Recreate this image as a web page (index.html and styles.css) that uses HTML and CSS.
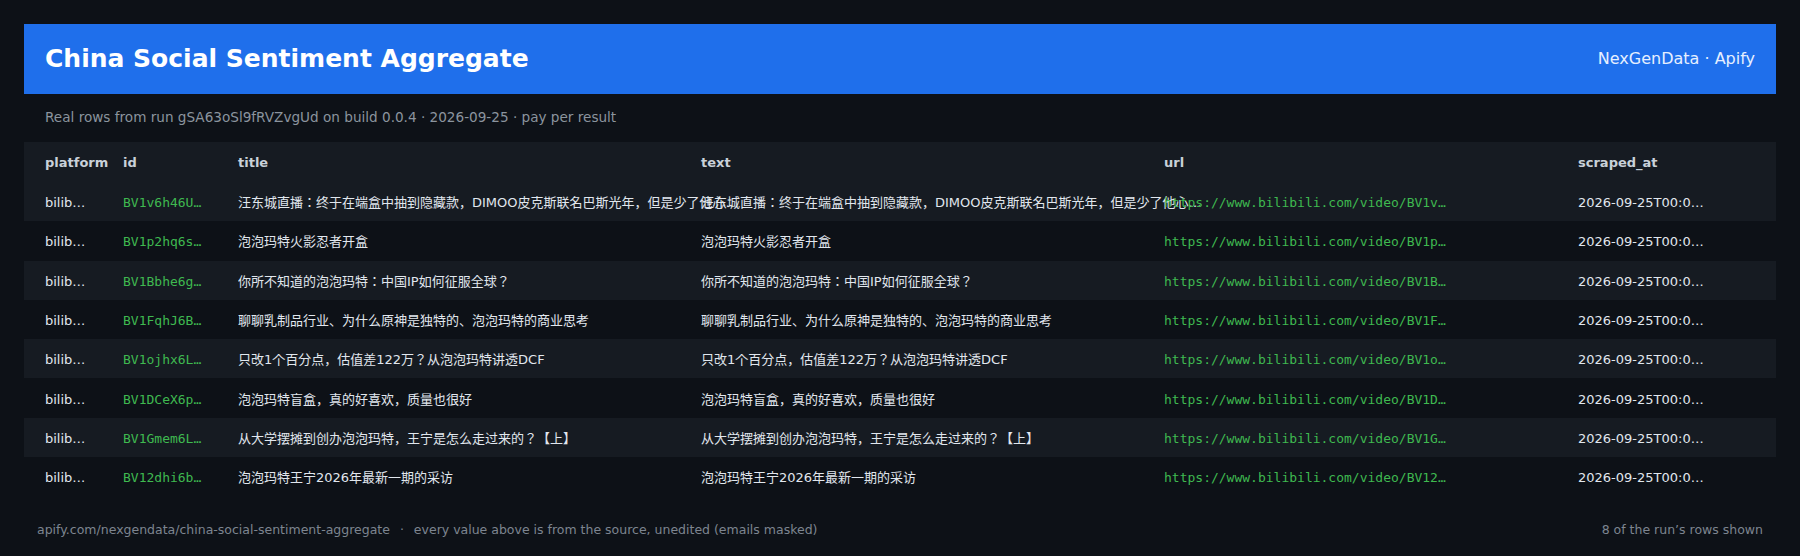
FILE: index.html
```html
<!DOCTYPE html>
<html lang="en">
<head>
<meta charset="utf-8">
<title>China Social Sentiment Aggregate</title>
<link rel="stylesheet" href="styles.css">
</head>
<body>
<div class="page">
  <header class="bar">
    <h1 class="bar-title">China Social Sentiment Aggregate</h1>
    <div class="bar-brand">NexGenData · Apify</div>
  </header>
  <p class="sub">Real rows from run gSA63oSl9fRVZvgUd on build 0.0.4 · 2026-09-25 · pay per result</p>
  <table class="grid">
    <colgroup>
      <col class="c-platform"><col class="c-id"><col class="c-title"><col class="c-text"><col class="c-url"><col class="c-time">
    </colgroup>
    <thead>
      <tr><th>platform</th><th>id</th><th>title</th><th>text</th><th>url</th><th>scraped_at</th></tr>
    </thead>
    <tbody>
      <tr>
        <td><div class="v v-plat">bilibili.com</div></td>
        <td><div class="v v-id">BV1v6h46UEaX</div></td>
        <td><div class="v v-long">汪东城直播：终于在端盒中抽到隐藏款，DIMOO皮克斯联名巴斯光年，但是少了他心心念念的胡迪</div></td>
        <td><div class="v v-long">汪东城直播：终于在端盒中抽到隐藏款，DIMOO皮克斯联名巴斯光年，但是少了他心心念念的胡迪</div></td>
        <td><div class="v v-url">https://www.bilibili.com/video/BV1v6h46UEaX</div></td>
        <td><div class="v v-time">2026-09-25T00:04:12Z</div></td>
      </tr>
      <tr>
        <td><div class="v v-plat">bilibili.com</div></td>
        <td><div class="v v-id">BV1p2hq6sE7k</div></td>
        <td><div class="v v-long">泡泡玛特火影忍者开盒</div></td>
        <td><div class="v v-long">泡泡玛特火影忍者开盒</div></td>
        <td><div class="v v-url">https://www.bilibili.com/video/BV1p2hq6sE7k</div></td>
        <td><div class="v v-time">2026-09-25T00:04:12Z</div></td>
      </tr>
      <tr>
        <td><div class="v v-plat">bilibili.com</div></td>
        <td><div class="v v-id">BV1Bbhe6gEyq</div></td>
        <td><div class="v v-long">你所不知道的泡泡玛特：中国IP如何征服全球？</div></td>
        <td><div class="v v-long">你所不知道的泡泡玛特：中国IP如何征服全球？</div></td>
        <td><div class="v v-url">https://www.bilibili.com/video/BV1Bbhe6gEyq</div></td>
        <td><div class="v v-time">2026-09-25T00:04:12Z</div></td>
      </tr>
      <tr>
        <td><div class="v v-plat">bilibili.com</div></td>
        <td><div class="v v-id">BV1FqhJ6BEp2</div></td>
        <td><div class="v v-long">聊聊乳制品行业、为什么原神是独特的、泡泡玛特的商业思考</div></td>
        <td><div class="v v-long">聊聊乳制品行业、为什么原神是独特的、泡泡玛特的商业思考</div></td>
        <td><div class="v v-url">https://www.bilibili.com/video/BV1FqhJ6BEp2</div></td>
        <td><div class="v v-time">2026-09-25T00:04:12Z</div></td>
      </tr>
      <tr>
        <td><div class="v v-plat">bilibili.com</div></td>
        <td><div class="v v-id">BV1ojhx6LE3m</div></td>
        <td><div class="v v-long">只改1个百分点，估值差122万？从泡泡玛特讲透DCF</div></td>
        <td><div class="v v-long">只改1个百分点，估值差122万？从泡泡玛特讲透DCF</div></td>
        <td><div class="v v-url">https://www.bilibili.com/video/BV1ojhx6LE3m</div></td>
        <td><div class="v v-time">2026-09-25T00:04:12Z</div></td>
      </tr>
      <tr>
        <td><div class="v v-plat">bilibili.com</div></td>
        <td><div class="v v-id">BV1DCeX6pE9w</div></td>
        <td><div class="v v-long">泡泡玛特盲盒，真的好喜欢，质量也很好</div></td>
        <td><div class="v v-long">泡泡玛特盲盒，真的好喜欢，质量也很好</div></td>
        <td><div class="v v-url">https://www.bilibili.com/video/BV1DCeX6pE9w</div></td>
        <td><div class="v v-time">2026-09-25T00:04:12Z</div></td>
      </tr>
      <tr>
        <td><div class="v v-plat">bilibili.com</div></td>
        <td><div class="v v-id">BV1Gmem6LEuh</div></td>
        <td><div class="v v-long">从大学摆摊到创办泡泡玛特，王宁是怎么走过来的？【上】</div></td>
        <td><div class="v v-long">从大学摆摊到创办泡泡玛特，王宁是怎么走过来的？【上】</div></td>
        <td><div class="v v-url">https://www.bilibili.com/video/BV1Gmem6LEuh</div></td>
        <td><div class="v v-time">2026-09-25T00:04:12Z</div></td>
      </tr>
      <tr>
        <td><div class="v v-plat">bilibili.com</div></td>
        <td><div class="v v-id">BV12dhi6bE4c</div></td>
        <td><div class="v v-long">泡泡玛特王宁2026年最新一期的采访</div></td>
        <td><div class="v v-long">泡泡玛特王宁2026年最新一期的采访</div></td>
        <td><div class="v v-url">https://www.bilibili.com/video/BV12dhi6bE4c</div></td>
        <td><div class="v v-time">2026-09-25T00:04:12Z</div></td>
      </tr>
    </tbody>
  </table>
  <footer class="foot">
    <span class="foot-left">apify.com/nexgendata/china-social-sentiment-aggregate <span class="sep">·</span> every value above is from the source, unedited (emails masked)</span>
    <span class="foot-right">8 of the run’s rows shown</span>
  </footer>
</div>
</body>
</html>
```

FILE: styles.css
```css
* { box-sizing: border-box; }

html, body {
  margin: 0;
  padding: 0;
  background: #0d1117;
}

body {
  font-family: "DejaVu Sans", "Noto Sans CJK JP", sans-serif;
  color: #e6edf3;
  width: 1800px;
  height: 556px;
  overflow: hidden;
}

.page {
  padding: 24px 24px 0 24px;
}

.bar {
  height: 70px;
  background: #1f6feb;
  display: flex;
  align-items: center;
  justify-content: space-between;
  padding: 0 21px 2px 21px;
}

.bar-title {
  margin: 0;
  font-size: 25px;
  font-weight: 700;
  color: #ffffff;
  letter-spacing: 0;
}

.bar-brand {
  font-size: 16px;
  color: #e6efff;
}

.sub {
  margin: 14px 0 0 21px;
  font-size: 13.6px;
  line-height: 18px;
  color: #8b949e;
}

.grid {
  margin-top: 16px;
  width: 1752px;
  table-layout: fixed;
  border-collapse: collapse;
  border-spacing: 0;
}

.c-platform { width: 99px; }
.c-id { width: 115px; }
.c-title { width: 463px; }
.c-text { width: 463px; }
.c-url { width: 414px; }
.c-time { width: 198px; }

.grid th,
.grid td {
  padding: 0;
  text-align: left;
  white-space: nowrap;
  vertical-align: middle;
  overflow: visible;
}

.grid th:first-child,
.grid td:first-child {
  padding-left: 21px;
}

.grid thead tr {
  background: #161b22;
}

.grid th {
  height: 40px;
  font-size: 13px;
  font-weight: 700;
  color: #c9d1d9;
}

.grid td {
  height: 39.3px;
  padding-top: 3px;
  font-size: 13px;
  color: #e1e7ee;
}

.grid tbody tr:nth-child(odd) {
  background: #161b22;
}

.v {
  overflow: hidden;
  text-overflow: ellipsis;
  white-space: nowrap;
  line-height: 18px;
}

.v-plat { max-width: 41px; }
.v-id {
  max-width: 80px;
  font-family: "DejaVu Sans Mono", monospace;
  color: #3fb950;
}
.v-long { width: 512px; }
.v-url {
  max-width: 285px;
  font-family: "DejaVu Sans Mono", monospace;
  color: #3fb950;
}
.v-time { max-width: 130px; }

.foot {
  display: flex;
  justify-content: space-between;
  align-items: center;
  margin-top: 26px;
  padding: 0 13px;
  font-size: 12.5px;
  line-height: 16px;
  color: #7d8590;
}

.sep {
  margin: 0 6px;
}
```
